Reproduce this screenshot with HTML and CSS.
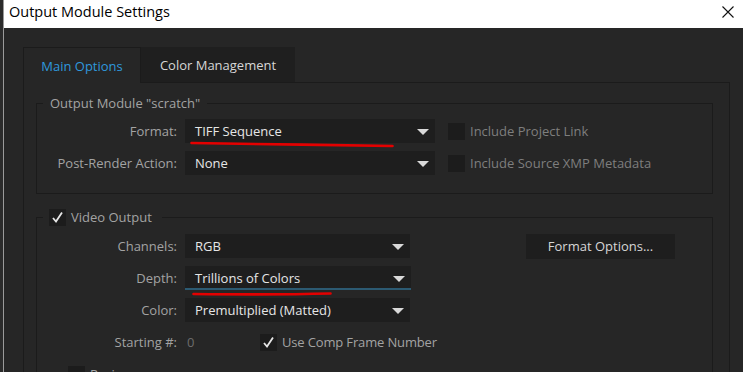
FILE: index.html
```html
<!DOCTYPE html>
<html lang="en">
<head>
    <meta charset="UTF-8">
    <meta name="viewport" content="width=device-width, initial-scale=1.0">
    <title>Output Module Settings</title>
    <link rel="stylesheet" href="styles.css">
</head>
<body>

<div class="window">
    <div class="titlebar">
        <span class="title">Output Module Settings</span>
        <svg class="close" width="12" height="12" viewBox="0 0 12 12">
            <path d="M0.5 0.5 L11.5 11.5 M11.5 0.5 L0.5 11.5" stroke="#111" stroke-width="1.1" fill="none"/>
        </svg>
    </div>

    <div class="content">
        <div class="tabs">
            <div class="tab active">Main Options</div>
            <div class="tab">Color Management</div>
        </div>

        <div class="panel">
            <fieldset class="group">
                <legend class="legend">Output Module "scratch"</legend>

                <div class="row">
                    <span class="label">Format:</span>
                    <div class="select wide">
                        TIFF Sequence
                        <span class="arrow"></span>
                        <svg class="mark mark-format" width="204" height="7" viewBox="0 0 204 7">
                            <path d="M1.5 2 C 60 3, 140 4, 202.5 5" stroke="#e40000" stroke-width="2.6" stroke-linecap="round" fill="none"/>
                        </svg>
                    </div>
                    <div class="check disabled"><span class="box"></span>Include Project Link</div>
                </div>

                <div class="row">
                    <span class="label">Post-Render Action:</span>
                    <div class="select wide">None<span class="arrow"></span></div>
                    <div class="check disabled"><span class="box"></span>Include Source XMP Metadata</div>
                </div>
            </fieldset>

            <fieldset class="group video">
                <legend class="legend check-legend">
                    <span class="box checked">
                        <svg width="17" height="17" viewBox="0 0 17 17"><path d="M4 9 L7 12.5 L13 3.5" stroke="#e6e6e6" stroke-width="1.8" fill="none"/></svg>
                    </span>Video Output
                </legend>

                <div class="row">
                    <span class="label">Channels:</span>
                    <div class="select">RGB<span class="arrow"></span></div>
                    <button class="btn">Format Options...</button>
                </div>

                <div class="row">
                    <span class="label">Depth:</span>
                    <div class="select focused">
                        Trillions of Colors
                        <span class="arrow"></span>
                        <svg class="mark mark-depth" width="140" height="6" viewBox="0 0 140 6">
                            <path d="M1.5 3 C 50 3.5, 100 3.5, 138.5 2.5" stroke="#e40000" stroke-width="2.6" stroke-linecap="round" fill="none"/>
                        </svg>
                    </div>
                </div>

                <div class="row">
                    <span class="label">Color:</span>
                    <div class="select">Premultiplied (Matted)<span class="arrow"></span></div>
                </div>

                <div class="row">
                    <span class="label">Starting #:</span>
                    <span class="number">0</span>
                    <div class="check frame">
                        <span class="box checked">
                            <svg width="17" height="17" viewBox="0 0 17 17"><path d="M4 9 L7 12.5 L13 3.5" stroke="#e6e6e6" stroke-width="1.8" fill="none"/></svg>
                        </span>Use Comp Frame Number
                    </div>
                </div>

                <div class="row resize">
                    <div class="check"><span class="box"></span>Resize</div>
                </div>
            </fieldset>
        </div>
    </div>
</div>

</body>
</html>
```

FILE: styles.css
```css
html, body {
    margin: 0;
    height: 100%;
}
body {
    width: 743px;
    height: 372px;
    overflow: hidden;
    background-color: #2b2b2b;
    font-family: "Open Sans", "Noto Sans", sans-serif;
    font-size: 13px;
}
.window {
    margin-left: 3px;
    height: 100%;
    border-left: 1px solid #9a9a9a;
    background-color: #262626;
}
.titlebar {
    height: 28px;
    background-color: #ffffff;
    display: flex;
    align-items: center;
    justify-content: space-between;
    padding: 0 9px 0 5px;
}
.title {
    font-size: 14.5px;
    color: #000;
    margin-top: -5px;
}
.close { margin-top: -5px; }

.content {
    padding: 19px 0 0 19px;
}
.tabs {
    display: flex;
    height: 35px;
}
.tab {
    box-sizing: border-box;
    height: 35px;
    line-height: 36px;
    text-align: center;
    color: #d6d6d6;
    background-color: #1f1f1f;
    width: 154px;
}
.tab.active {
    width: 118px;
    color: #2f98dd;
    background-color: #262626;
    border: 1px solid #1b1b1b;
    border-bottom: none;
    height: 36px;
    position: relative;
    z-index: 1;
}
.panel {
    box-sizing: border-box;
    width: 707px;
    height: 300px;
    border: 1px solid #1b1b1b;
    border-bottom: none;
    padding: 11px 16px 0 12px;
}

.group {
    margin: 0;
    padding: 7px 0 18px 0;
    border: 1px solid #1b1b1b;
    min-width: 0;
}
.group.video {
    margin-top: 14px;
    padding-top: 8px;
    padding-bottom: 0;
    height: 200px;
}
.legend {
    margin-left: 6px;
    padding: 0 7px;
    line-height: 18px;
    color: #a3a3a3;
}
.check-legend {
    display: flex;
    align-items: center;
    padding: 0 10px 0 6px;
    margin-left: 6px;
    color: #a3a3a3;
}
.check-legend .box { margin-right: 5px; }

.row {
    display: flex;
    align-items: center;
    height: 24px;
    margin-bottom: 8px;
}
.group .row:last-of-type { margin-bottom: 0; }
.label {
    width: 140px;
    text-align: right;
    color: #a3a3a3;
    margin-right: 8px;
}
.select {
    position: relative;
    box-sizing: border-box;
    width: 225px;
    height: 24px;
    line-height: 24px;
    padding-left: 10px;
    background-color: #1e1e1e;
    color: #e6e6e6;
}
.select.wide { width: 250px; }
.select.focused {
    border-bottom: 2px solid #2c5a72;
    width: 226px;
}
.arrow {
    position: absolute;
    right: 6px;
    top: 10px;
    width: 0;
    height: 0;
    border-left: 6px solid transparent;
    border-right: 6px solid transparent;
    border-top: 6px solid #d9d9d9;
}
.mark {
    position: absolute;
    pointer-events: none;
}
.mark-format { left: 5px; top: 22px; }
.mark-depth { left: 7px; top: 25px; }

.check {
    display: flex;
    align-items: center;
    color: #d0d0d0;
}
.check.disabled {
    margin-left: 13px;
    color: #7e7e7e;
}
.box {
    display: inline-block;
    width: 17px;
    height: 17px;
    background-color: #1c1c1c;
    margin-right: 5px;
    flex: none;
}
.box svg { display: block; }

.btn {
    margin-left: 116px;
    width: 149px;
    height: 25px;
    border: none;
    background-color: #1e1e1e;
    color: #d6d6d6;
    font-family: inherit;
    font-size: 13px;
    padding: 0;
}
.number {
    color: #6c6c6c;
    width: 73px;
    padding-left: 2px;
}
.frame {
    color: #a3a3a3;
    letter-spacing: -0.15px;
}
.resize { margin-left: 31px; margin-top: 4px; }
.resize .check { color: #a3a3a3; }
```
